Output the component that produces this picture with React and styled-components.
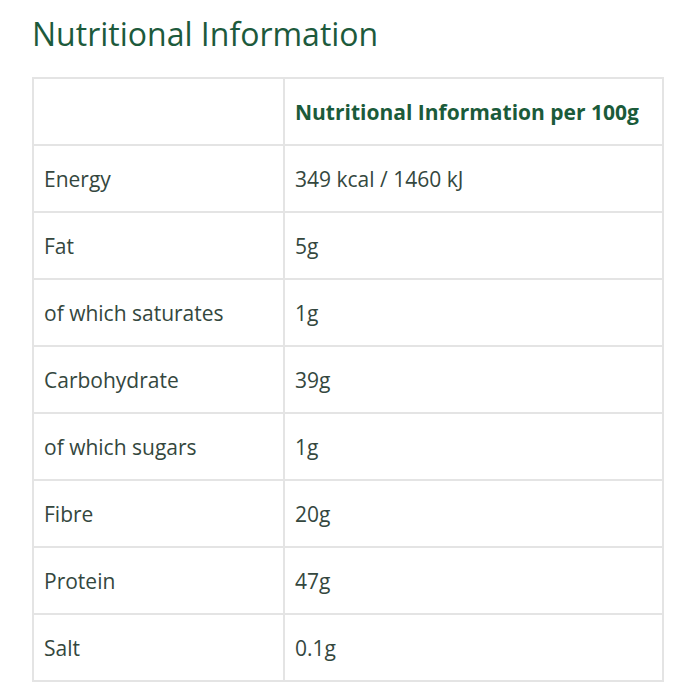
import React from "react";
import styled, { createGlobalStyle } from "styled-components";

const GlobalStyle = createGlobalStyle`
  body {
    margin: 0;
    background: #ffffff;
    font-family: "Open Sans", "Noto Sans", sans-serif;
  }
`;

const Page = styled.div`
  padding: 11px 36px 0 32px;
`;

const Title = styled.h2`
  margin: 0 0 20px 0;
  font-size: 32px;
  font-weight: 400;
  line-height: 46px;
  color: #1d5a3c;
`;

const Table = styled.table`
  width: 632px;
  border-collapse: collapse;
  table-layout: fixed;
`;

const Cell = styled.td`
  box-sizing: border-box;
  height: 67px;
  padding: 0 10px;
  border: 2px solid #e4e4e4;
  font-size: 21px;
  color: ${p => (p.$head ? "#1b5b3a" : "#34473e")};
  font-weight: ${p => (p.$head ? 700 : 400)};
  vertical-align: middle;
  width: ${p => p.$width || "auto"};
`;

const rows = [
  ["Energy", "349 kcal / 1460 kJ"],
  ["Fat", "5g"],
  ["of which saturates", "1g"],
  ["Carbohydrate", "39g"],
  ["of which sugars", "1g"],
  ["Fibre", "20g"],
  ["Protein", "47g"],
  ["Salt", "0.1g"],
];

export default function App() {
  return (
    <>
      <GlobalStyle />
      <Page>
        <Title>Nutritional Information</Title>
        <Table>
          <thead>
            <tr>
              <Cell $width="251px" />
              <Cell $head>Nutritional Information per 100g</Cell>
            </tr>
          </thead>
          <tbody>
            {rows.map(([name, value]) => (
              <tr key={name}>
                <Cell>{name}</Cell>
                <Cell>{value}</Cell>
              </tr>
            ))}
          </tbody>
        </Table>
      </Page>
    </>
  );
}
